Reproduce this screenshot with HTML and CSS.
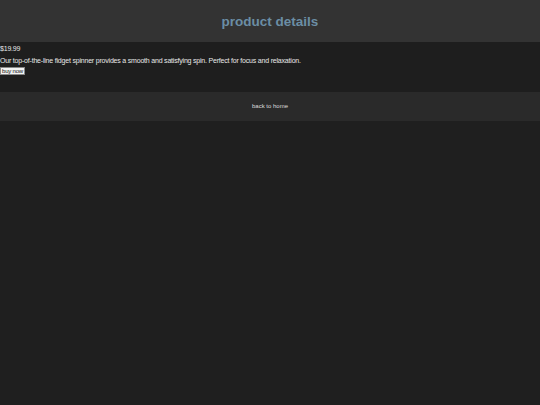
FILE: index.html
```html
<!DOCTYPE html>
<html>
<head>
<meta charset="utf-8">
<link rel="stylesheet" href="styles.css">
</head>
<body>
<header class="site-header">
  <h1 class="title">product details</h1>
</header>
<main class="product">
  <p class="price">$19.99</p>
  <p class="desc">Our top-of-the-line fidget spinner provides a smooth and satisfying spin. Perfect for focus and relaxation.</p>
  <button class="buy">buy now</button>
</main>
<footer class="site-footer">
  <a class="home-link">back to home</a>
</footer>
</body>
</html>
```
FILE: styles.css
```css
html, body {
  margin: 0;
  padding: 0;
  background: #1f1f1f;
  font-family: "Liberation Sans", Arial, sans-serif;
  color: #e8e8e8;
}
.site-header {
  background: #333333;
  height: 42px;
  display: flex;
  align-items: center;
  justify-content: center;
}
.title {
  margin: 0;
  font-size: 13.5px;
  font-weight: bold;
  color: #6b8ea5;
}
.product {
  background: #1e1e1e;
  height: 50px;
  padding-top: 3px;
  box-sizing: border-box;
}
.price, .desc {
  margin: 0;
  font-size: 7px;
  line-height: 8px;
  letter-spacing: -0.2px;
}
.price { margin-bottom: 4px; }
.desc { margin-bottom: 2px; }
.buy {
  display: block;
  font-family: "Liberation Sans", Arial, sans-serif;
  font-size: 6px;
  letter-spacing: -0.2px;
  padding: 0 1px;
  margin: 0;
  background: #f2f2f2;
  color: #111;
  border: 1px solid #888;
  border-radius: 0;
  line-height: 6px;
  height: 8px;
}
.site-footer {
  background: #2a2a2a;
  height: 29px;
  display: flex;
  align-items: center;
  justify-content: center;
}
.home-link {
  font-size: 6px;
  line-height: 6px;
  margin-bottom: 1px;
  color: #dddddd;
}
```
